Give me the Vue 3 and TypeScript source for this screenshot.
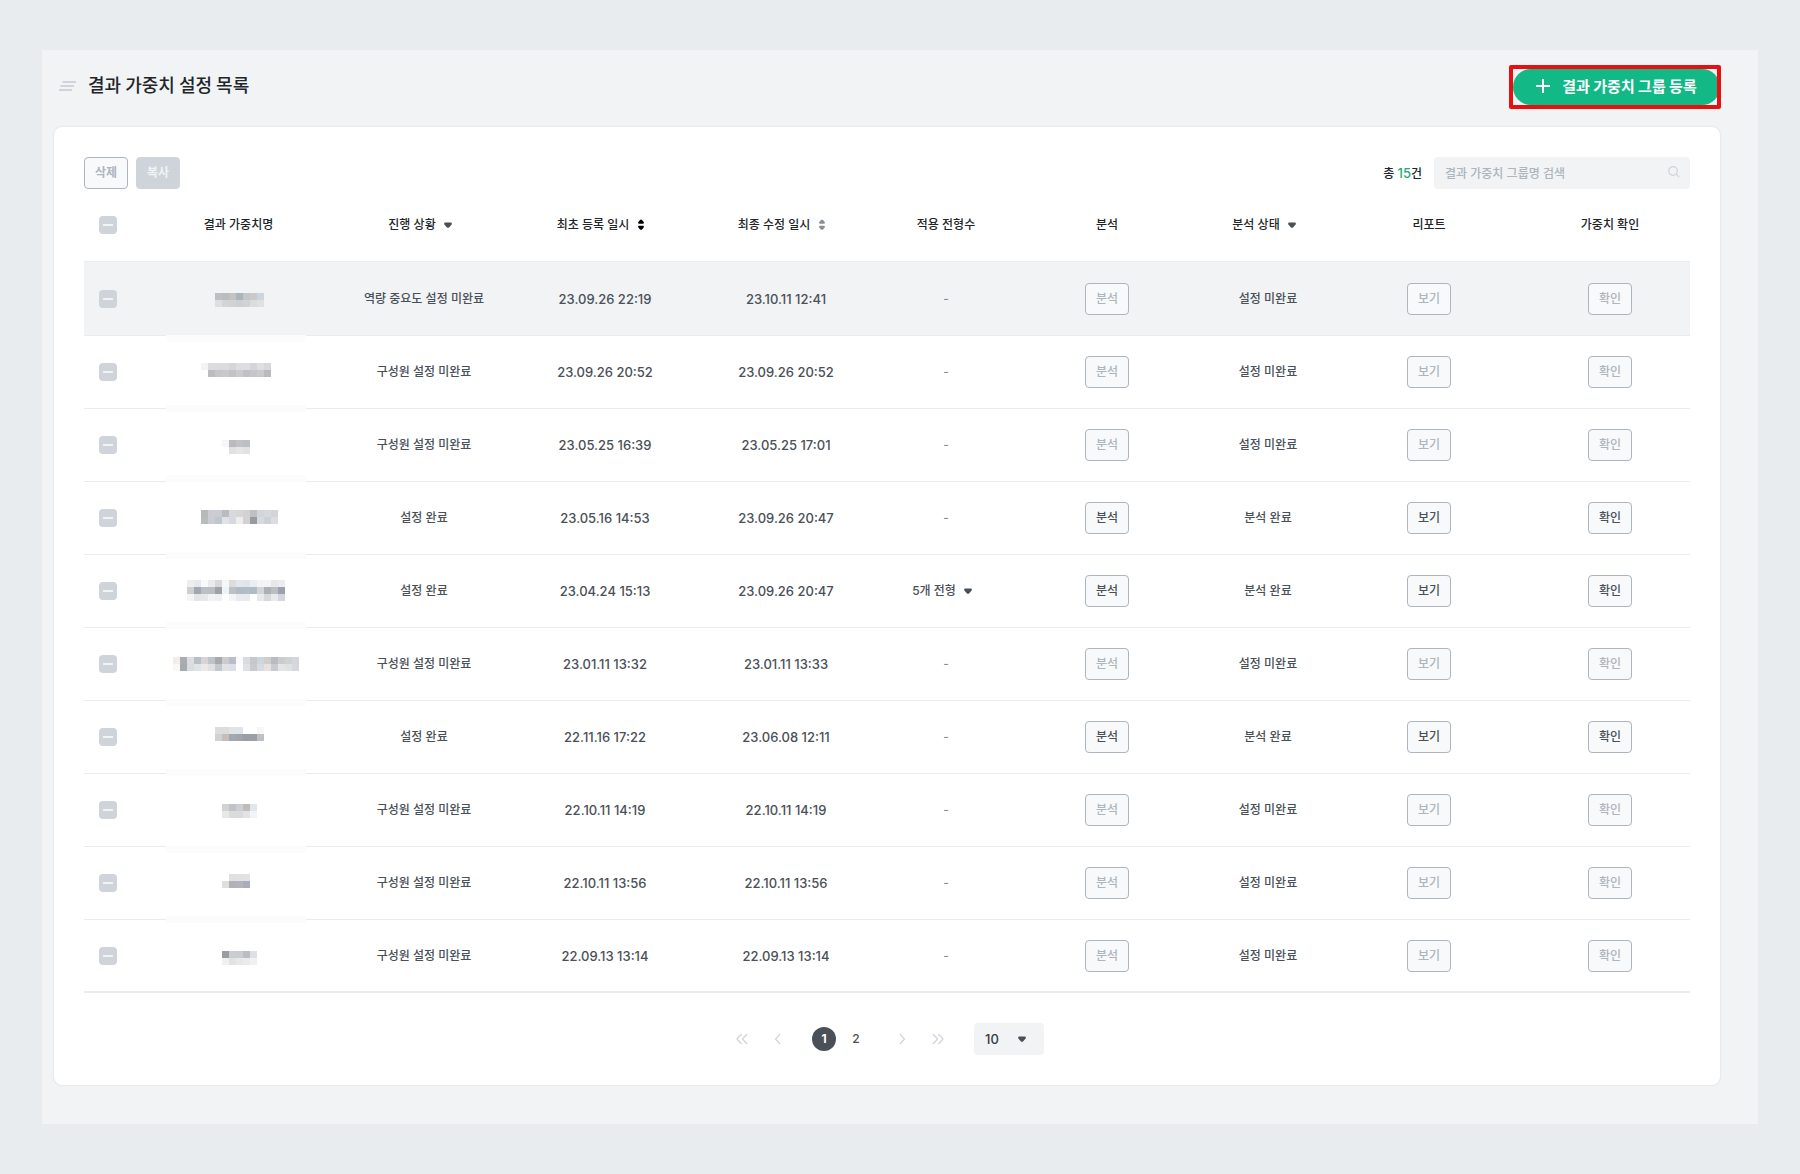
<script setup lang="ts">
import { ref } from 'vue'

interface WeightRow {
  id: number
  progress: string
  createdAt: string
  updatedAt: string
  applied: string
  analysed: boolean
  bandTop: number | null
  maskTop: number
  maskLeft: number
  mask: string[]
}

const CELL = 7

const rows: WeightRow[] = [
  {
    id: 1, progress: '역량 중요도 설정 미완료', createdAt: '23.09.26 22:19', updatedAt: '23.10.11 12:41', applied: '', analysed: false,
    bandTop: null, maskTop: 31, maskLeft: 7,
    mask: ['bcc0c3 babdc0 c5c3c2 a9b4bb c5c6c7 c8cacc cfd5dd', 'dcdee0 d2d4d6 d0d2d3 cdcfd1 d2d2d3 dadcdd dfe1e4'],
  },
  {
    id: 2, progress: '구성원 설정 미완료', createdAt: '23.09.26 20:52', updatedAt: '23.09.26 20:52', applied: '', analysed: false,
    bandTop: -1, maskTop: 27, maskLeft: 5,
    mask: ['f3f3f4 dcdcdf dcdcdf dbdbde d5d5d7 dedee1 dedddf d5d5d9 dedfe1 d8d8db', '- bcbcbf c4c6cb c9c9cd c3c3c5 cacbd0 c0c1c5 c6c6ca cacace b9b9be'],
  },
  {
    id: 3, progress: '구성원 설정 미완료', createdAt: '23.05.25 16:39', updatedAt: '23.05.25 17:01', applied: '', analysed: false,
    bandTop: -4, maskTop: 31, maskLeft: 8,
    mask: ['f6f6f6 b8babc c0c2c5 bcc0c3', '- e1e1e2 e6e6e6 e2e2e4'],
  },
  {
    id: 4, progress: '설정 완료', createdAt: '23.05.16 14:53', updatedAt: '23.09.26 20:47', applied: '', analysed: true,
    bandTop: -7, maskTop: 28, maskLeft: 5,
    mask: ['b6b9b9 cdccd5 cccbd2 babbc0 d8d9dd d7d7da d3d1d3 bec0c2 d2d5d9 d6d8dc d3d4d7', 'b9bcbc cbcbd5 bfc7ce e0e2e5 d5d9e0 eeeeee d4d1d1 969b9e d6d9de cbd1d8 dcdde1'],
  },
  {
    id: 5, progress: '설정 완료', createdAt: '23.04.24 15:13', updatedAt: '23.09.26 20:47', applied: '5개 전형', analysed: true,
    bandTop: -3, maskTop: 25, maskLeft: 3,
    mask: [
      'eeeeee e5e9ed f8fbfe eaebed d7d8da f4f8fb dadcde e2e7ec dee6ec e8eef2 f3f4f5 f3f4f6 e7e8eb ededee',
      'd0d0d0 9fa8b3 bcc0c3 bcbfc1 a0a1a4 edf5f9 bdc1c4 b2bbc3 b3bdc5 b1bbc3 d2d4d7 adafb1 bbbec1 9ba1af',
      'f5f5f4 e3e5e7 e5e7e9 f2f3f3 eff0f1 - f4f5f6 e9ecef e8ebee - e7e9ea d6d8db eaeaeb d3d6dc',
    ],
  },
  {
    id: 6, progress: '구성원 설정 미완료', createdAt: '23.01.11 13:32', updatedAt: '23.01.11 13:33', applied: '', analysed: false,
    bandTop: -6, maskTop: 29, maskLeft: 1,
    mask: [
      'f2eeec aaacb1 dbdde0 b8bec8 d9d4d3 bec2ca a7a9ac cecbca b7bec9 fafafb d9dbde c6c7c8 ced5dc cfcecf b8bbbf cbccce cfd1d3 d3d7dc',
      'fbf7f5 a5aab1 d8dce1 e0e3e7 ebe8e7 dee0e5 c4c7cb e0e2e5 dce0e6 - dfe2e5 c8cacc d4dbe2 e8e2df c8ccd1 e3e5e8 dee1e5 d5d9df',
    ],
  },
  {
    id: 7, progress: '설정 완료', createdAt: '22.11.16 17:22', updatedAt: '23.06.08 12:11', applied: '', analysed: true,
    bandTop: -2, maskTop: 26, maskLeft: 7,
    mask: ['dddddd dcdcdd e2e3e7 e2e3e8 - - f7f7f8', 'd1d1d1 c6bdb7 a2a8b2 a0a5ad 999fa5 9b9fa2 bdc0c4'],
  },
  {
    id: 8, progress: '구성원 설정 미완료', createdAt: '22.10.11 14:19', updatedAt: '22.10.11 14:19', applied: '', analysed: false,
    bandTop: -5, maskTop: 30, maskLeft: 8,
    mask: ['d2d2d3 bfc4c8 cdcfd2 c0bcb9 e1e6ed', 'e8e8e8 dadbdc d8dadb e4e3e3 f1f5fa'],
  },
  {
    id: 9, progress: '구성원 설정 미완료', createdAt: '22.10.11 13:56', updatedAt: '22.10.11 13:56', applied: '', analysed: false,
    bandTop: -1, maskTop: 27, maskLeft: 8,
    mask: ['- e0e0e1 e0e1e2 e1e2e4', 'e0dfdf b2b2b4 b1b4ba a9adba'],
  },
  {
    id: 10, progress: '구성원 설정 미완료', createdAt: '22.09.13 13:14', updatedAt: '22.09.13 13:14', applied: '', analysed: false,
    bandTop: -4, maskTop: 31, maskLeft: 8,
    mask: ['9b9ba2 c8ccd3 c9cdd3 bdbdc0 dde1e7', 'f0f0f1 e2e2e3 e8e8ea ebebec f1f1f3'],
  },
]

const cellsOf = (row: WeightRow) =>
  row.mask.flatMap((line, r) =>
    line.split(' ').map((tone, c) => ({
      x: (row.maskLeft + c) * CELL,
      y: row.maskTop + r * CELL,
      fill: '#' + tone,
      shown: tone !== '-',
    })).filter((cell) => cell.shown),
  )

const keyword = ref('')
const pageSize = ref('10')
</script>

<template>
  <main class="panel">
    <header class="heading">
      <svg class="menu-mark" width="19" height="10" viewBox="0 0 19 10" aria-hidden="true">
        <path d="M4.5 1H18M2.5 5H16M1 9H14" />
      </svg>
      <h1>결과 가중치 설정 목록</h1>
      <div class="highlight">
        <button type="button" class="create">
          <svg width="14" height="14" viewBox="0 0 14 14" aria-hidden="true"><path d="M7 0V14M0 7H14" /></svg>
          결과 가중치 그룹 등록
        </button>
      </div>
    </header>

    <section class="card">
      <div class="toolbar">
        <button type="button" class="btn muted strong">삭제</button>
        <button type="button" class="btn filled strong">복사</button>
        <p class="total">총 <strong>15</strong>건</p>
        <div class="search">
          <input v-model="keyword" type="search" placeholder="결과 가중치 그룹명 검색" aria-label="결과 가중치 그룹명 검색">
          <svg width="12" height="12" viewBox="0 0 12 12" aria-hidden="true">
            <circle cx="5" cy="5" r="4.3" /><path d="M8.2 8.2L11.3 11.3" />
          </svg>
        </div>
      </div>

      <table>
        <colgroup>
          <col class="c-check"><col class="c-name"><col class="c-progress"><col class="c-created"><col class="c-updated">
          <col class="c-applied"><col class="c-analysis"><col class="c-status"><col class="c-report"><col class="c-confirm">
        </colgroup>
        <thead>
          <tr>
            <th class="check"><input type="checkbox" aria-label="전체 선택"></th>
            <th>결과 가중치명</th>
            <th>
              <button type="button" class="plain">진행 상황
                <svg width="16" height="16" viewBox="0 0 16 16" class="caret"><path d="M5 5.5H11Q12.5 5.8 11.6 7.4L9.3 10.2Q8 11.4 6.7 10.2L4.4 7.4Q3.5 5.8 5 5.5Z" /></svg>
              </button>
            </th>
            <th>
              <button type="button" class="plain">최초 등록 일시
                <svg width="16" height="16" viewBox="0 0 16 16" class="sort active"><path d="M8 2.5Q8.6 2.5 9.2 3.2L10.7 5Q11.4 6.3 10.2 6.7H5.8Q4.6 6.3 5.3 5L6.8 3.2Q7.4 2.5 8 2.5ZM5.8 8.7H10.2Q11.4 9.1 10.7 10.4L9.2 12.2Q8 13.4 6.8 12.2L5.3 10.4Q4.6 9.1 5.8 8.7Z" /></svg>
              </button>
            </th>
            <th>
              <button type="button" class="plain">최종 수정 일시
                <svg width="16" height="16" viewBox="0 0 16 16" class="sort"><path d="M8 2.5Q8.6 2.5 9.2 3.2L10.7 5Q11.4 6.3 10.2 6.7H5.8Q4.6 6.3 5.3 5L6.8 3.2Q7.4 2.5 8 2.5ZM5.8 8.7H10.2Q11.4 9.1 10.7 10.4L9.2 12.2Q8 13.4 6.8 12.2L5.3 10.4Q4.6 9.1 5.8 8.7Z" /></svg>
              </button>
            </th>
            <th>적용 전형수</th>
            <th>분석</th>
            <th>
              <button type="button" class="plain">분석 상태
                <svg width="16" height="16" viewBox="0 0 16 16" class="caret"><path d="M5 5.5H11Q12.5 5.8 11.6 7.4L9.3 10.2Q8 11.4 6.7 10.2L4.4 7.4Q3.5 5.8 5 5.5Z" /></svg>
              </button>
            </th>
            <th>리포트</th>
            <th>가중치 확인</th>
          </tr>
        </thead>
        <tbody>
          <tr v-for="row in rows" :key="row.id">
            <td class="check"><input type="checkbox" :aria-label="`${row.id}번 항목 선택`"></td>
            <td class="name">
              <svg width="140" height="73" aria-hidden="true">
                <rect v-if="row.bandTop !== null" x="0" :y="row.bandTop" width="140" height="7" fill="#fcfcfc" />
                <rect v-for="cell in cellsOf(row)" :key="`${cell.x}-${cell.y}`" :x="cell.x" :y="cell.y" width="7" height="7" :fill="cell.fill" />
              </svg>
            </td>
            <td>{{ row.progress }}</td>
            <td class="date">{{ row.createdAt }}</td>
            <td class="date">{{ row.updatedAt }}</td>
            <td>
              <button v-if="row.applied" type="button" class="plain">{{ row.applied }}
                <svg width="16" height="16" viewBox="0 0 16 16" class="caret"><path d="M5 5.5H11Q12.5 5.8 11.6 7.4L9.3 10.2Q8 11.4 6.7 10.2L4.4 7.4Q3.5 5.8 5 5.5Z" /></svg>
              </button>
              <span v-else class="none">-</span>
            </td>
            <td><button type="button" class="btn" :class="{ muted: !row.analysed }">분석</button></td>
            <td>{{ row.analysed ? '분석 완료' : '설정 미완료' }}</td>
            <td><button type="button" class="btn" :class="{ muted: !row.analysed }">보기</button></td>
            <td><button type="button" class="btn" :class="{ muted: !row.analysed }">확인</button></td>
          </tr>
        </tbody>
      </table>

      <nav class="pager" aria-label="페이지">
        <div class="steps">
          <button type="button" aria-label="처음"><svg width="12" height="12" viewBox="0 0 12 12"><path d="M5.5 1L1 6L5.5 11M11 1L6.5 6L11 11" /></svg></button>
          <button type="button" aria-label="이전"><svg width="12" height="12" viewBox="0 0 12 12"><path d="M8 1L3.5 6L8 11" /></svg></button>
        </div>
        <div class="pages">
          <button type="button" class="current" aria-current="page">1</button>
          <button type="button">2</button>
        </div>
        <div class="steps">
          <button type="button" aria-label="다음"><svg width="12" height="12" viewBox="0 0 12 12"><path d="M4 1L8.5 6L4 11" /></svg></button>
          <button type="button" aria-label="마지막"><svg width="12" height="12" viewBox="0 0 12 12"><path d="M1 1L5.5 6L1 11M6.5 1L11 6L6.5 11" /></svg></button>
        </div>
        <div class="size">
          <select v-model="pageSize" aria-label="페이지당 항목 수">
            <option>10</option>
            <option>20</option>
            <option>50</option>
          </select>
          <svg width="16" height="16" viewBox="0 0 16 16" class="caret"><path d="M5 5.5H11Q12.5 5.8 11.6 7.4L9.3 10.2Q8 11.4 6.7 10.2L4.4 7.4Q3.5 5.8 5 5.5Z" /></svg>
        </div>
      </nav>
    </section>
  </main>
</template>

<style>
body {
  margin: 0;
  background: #e8ecef;
}
</style>

<style scoped>
.panel {
  box-sizing: border-box;
  margin: 50px 42px;
  padding: 0 38px 39px 12px;
  background: #f1f3f5;
  color: #212529;
  font: 500 12px/20px Inter, "Noto Sans CJK KR", sans-serif;
}

button,
input,
select {
  box-sizing: border-box;
  margin: 0;
  font: inherit;
  color: inherit;
}

button {
  padding: 0;
  border: 0;
  background: none;
  cursor: pointer;
}

.heading {
  display: flex;
  align-items: center;
  box-sizing: border-box;
  height: 77px;
  padding: 0 0 4px 4px;
}

.menu-mark {
  margin-bottom: 2px;
  fill: none;
  stroke: #ced4da;
  stroke-width: 2;
}

h1 {
  margin: 0 auto 0 11px;
  padding-bottom: 6px;
  font: 500 18px/28px "Noto Sans CJK KR", sans-serif;
}

.highlight {
  position: relative;
}

.highlight::after {
  content: "";
  position: absolute;
  inset: -4px -1px -4px -4px;
  border: 4px solid #e80f10;
  border-radius: 2px;
  pointer-events: none;
}

.create {
  display: flex;
  align-items: center;
  justify-content: center;
  gap: 12px;
  width: 207px;
  height: 36px;
  padding-bottom: 2px;
  border-radius: 18px;
  background: #12b886;
  color: #fff;
  font: 700 15px/20px "Noto Sans CJK KR", sans-serif;
}

.create svg {
  fill: none;
  stroke: #fff;
  stroke-width: 2;
}

.card {
  padding: 30px;
  border-radius: 8px;
  background: #fff;
  box-shadow: 0 0 2px rgba(33, 37, 41, 0.16);
}

.toolbar {
  display: flex;
  align-items: center;
  gap: 8px;
}

.btn {
  width: 44px;
  height: 32px;
  border: 1px solid #adb5bd;
  border-radius: 4px;
  background: #f8f9fa;
  color: #495057;
  vertical-align: middle;
}

.btn.muted {
  color: #adb5bd;
}

.btn.strong {
  font-weight: 700;
}

.btn.filled {
  border-color: #ced4da;
  background: #ced4da;
  color: #f1f3f5;
}

.total {
  margin: 0 4px 0 auto;
}

.total strong {
  color: #1fa97c;
  font-size: 13px;
  font-weight: 500;
}

.search {
  position: relative;
  width: 256px;
}

.search input {
  display: block;
  width: 100%;
  height: 32px;
  padding: 0 36px 0 11px;
  border: 0;
  border-radius: 4px;
  outline: 0;
  background: #f1f3f5;
}

.search input::placeholder {
  color: #adb5bd;
  opacity: 1;
}

.search svg {
  position: absolute;
  top: 9px;
  right: 10px;
  fill: none;
  stroke: #ced4da;
  stroke-width: 1.2;
}

table {
  width: 100%;
  table-layout: fixed;
  border-collapse: separate;
  border-spacing: 0;
  text-align: center;
}

.c-check { width: 69px; }
.c-name { width: 171px; }
.c-progress { width: 200px; }
.c-created { width: 162px; }
.c-updated { width: 200px; }
.c-applied { width: 120px; }
.c-analysis { width: 202px; }
.c-status { width: 120px; }
.c-report { width: 202px; }
.c-confirm { width: 160px; }

th,
td {
  box-sizing: border-box;
  height: 73px;
  padding: 0;
  border-bottom: 1px solid #e9ecef;
  font-weight: 500;
  white-space: nowrap;
}

td {
  color: #495057;
}

tbody tr:first-child td {
  height: 74px;
  background: #f1f3f5;
}

tbody tr:last-child td {
  border-bottom-width: 2px;
}

.check {
  padding-left: 15px;
  text-align: left;
}

.check input {
  display: grid;
  place-items: center;
  width: 18px;
  height: 18px;
  border-radius: 4px;
  background: #ced4da;
  appearance: none;
}

.check input::before {
  content: "";
  width: 10px;
  height: 2px;
  background: #f1f3f5;
}

.name {
  position: relative;
}

.name svg {
  position: absolute;
  top: 0;
  left: 13px;
  overflow: visible;
  shape-rendering: crispEdges;
}

.date {
  font-size: 13px;
}

.none {
  color: #868e96;
}

.plain {
  display: inline-flex;
  align-items: center;
  gap: 4px;
  padding-right: 4px;
  vertical-align: middle;
}

.caret {
  fill: #495057;
}

.sort {
  fill: #868e96;
}

.sort.active {
  fill: #000;
}

.pager {
  display: flex;
  align-items: center;
  justify-content: center;
  gap: 22px;
  margin-top: 30px;
}

.steps,
.pages {
  display: flex;
  gap: 12px;
}

.pages {
  gap: 8px;
}

.pager button {
  display: grid;
  place-items: center;
  width: 24px;
  height: 24px;
  border-radius: 12px;
  color: #495057;
}

.pager .current {
  background: #495057;
  color: #fff;
  font-weight: 700;
}

.steps svg {
  fill: none;
  stroke: #ced4da;
  stroke-width: 1.2;
}

.size {
  position: relative;
  margin-left: 2px;
}

.size select {
  display: block;
  width: 70px;
  height: 32px;
  padding: 0 11px;
  border: 0;
  border-radius: 4px;
  background: #f1f3f5;
  color: #343a40;
  font-size: 13px;
  appearance: none;
}

.size svg {
  position: absolute;
  top: 8px;
  right: 14px;
  pointer-events: none;
}
</style>
